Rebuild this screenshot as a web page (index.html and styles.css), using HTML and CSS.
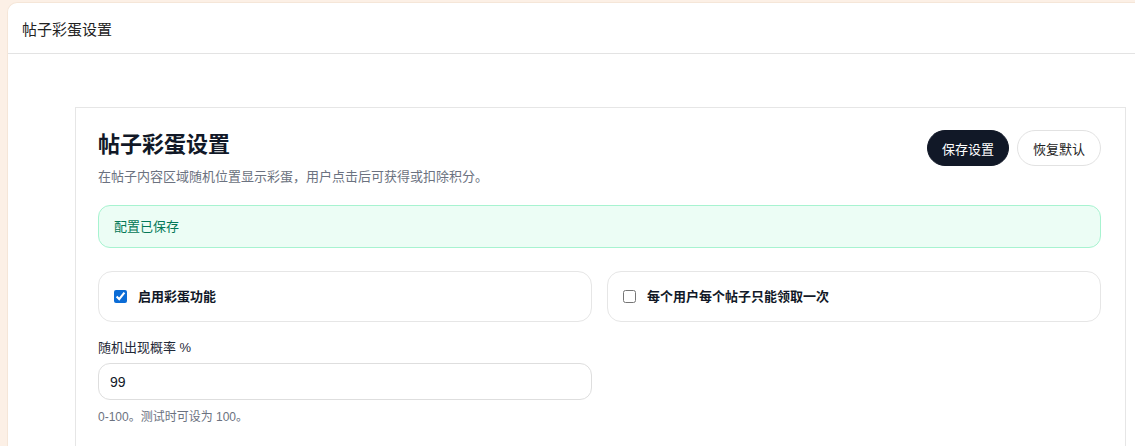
FILE: index.html
```html
<!DOCTYPE html>
<html lang="zh-CN">
<head>
  <meta charset="UTF-8">
  <meta name="viewport" content="width=device-width, initial-scale=1.0">
  <title>帖子彩蛋设置</title>
  <link rel="stylesheet" href="styles.css">
</head>
<body>
  <div class="panel">
    <div class="panel-head">帖子彩蛋设置</div>
    <div class="panel-body">
      <div class="card">
        <div class="card-top">
          <div>
            <h1>帖子彩蛋设置</h1>
            <p class="desc">在帖子内容区域随机位置显示彩蛋，用户点击后可获得或扣除积分。</p>
          </div>
          <div class="actions">
            <button class="btn btn-dark" type="button">保存设置</button>
            <button class="btn btn-light" type="button">恢复默认</button>
          </div>
        </div>

        <div class="notice">配置已保存</div>

        <div class="switches">
          <label class="switch">
            <input type="checkbox" checked>
            <span>启用彩蛋功能</span>
          </label>
          <label class="switch">
            <input type="checkbox">
            <span>每个用户每个帖子只能领取一次</span>
          </label>
        </div>

        <div class="field">
          <label for="rate">随机出现概率 %</label>
          <input id="rate" type="text" value="99">
          <p class="hint">0-100。测试时可设为 100。</p>
        </div>
      </div>
    </div>
  </div>
</body>
</html>
```

FILE: styles.css
```css
* {
  margin: 0;
  padding: 0;
  box-sizing: border-box;
}

html, body {
  height: 100%;
  overflow: hidden;
}

body {
  background-color: #fcf0e6;
  font-family: "Liberation Sans", "Noto Sans CJK SC", sans-serif;
  color: #111827;
  padding: 2px 0 0 7px;
}

/* khung trắng bên ngoài */
.panel {
  width: 1160px;
  height: 600px;
  background-color: #ffffff;
  border-top-left-radius: 10px;
  border-top: 1px solid #f5e6d8;
  border-left: 1px solid #f5e6d8;
}

.panel-head {
  height: 51px;
  display: flex;
  align-items: center;
  padding-left: 14px;
  font-size: 15px;
  color: #222222;
  border-bottom: 1px solid #e3e3e3;
}

.panel-body {
  padding: 53px 0 0 67px;
}

.card {
  width: 1051px;
  min-height: 360px;
  border: 1px solid #e6e6e6;
  padding: 21px 24px 0 22px;
}

.card-top {
  display: flex;
  justify-content: space-between;
  align-items: flex-start;
}

h1 {
  font-size: 22px;
  font-weight: bold;
  line-height: 32px;
  color: #111827;
}

.desc {
  margin-top: 6px;
  font-size: 13px;
  line-height: 19px;
  color: #6b7280;
}

.actions {
  display: flex;
  gap: 8px;
  padding-top: 1px;
}

.btn {
  height: 36px;
  padding: 0 14px;
  border-radius: 18px;
  font-family: inherit;
  font-size: 13px;
  cursor: pointer;
}

.btn-dark {
  background-color: #111827;
  border: 1px solid #111827;
  color: #ffffff;
}

.btn-light {
  background-color: #ffffff;
  border: 1px solid #e2e2e2;
  color: #222222;
  padding: 0 15px;
}

/* thông báo đã lưu */
.notice {
  margin-top: 19px;
  padding: 11px 15px;
  font-size: 13px;
  line-height: 19px;
  color: #047857;
  background-color: #ecfdf5;
  border: 1px solid #a7f3d0;
  border-radius: 12px;
}

.switches {
  margin-top: 23px;
  display: grid;
  grid-template-columns: 1fr 1fr;
  gap: 15px;
}

.switch {
  display: flex;
  align-items: center;
  gap: 11px;
  padding: 15px 15px;
  border: 1px solid #e6e6e6;
  border-radius: 14px;
  font-size: 13px;
  font-weight: bold;
  line-height: 19px;
  cursor: pointer;
}

.switch input {
  width: 13px;
  height: 13px;
  margin: 0;
  accent-color: #0b6cd6;
}

.field {
  margin-top: 16px;
}

.field label {
  display: block;
  font-size: 13px;
  line-height: 19px;
  color: #1f2937;
}

.field input {
  display: block;
  margin-top: 6px;
  width: 494px;
  height: 37px;
  padding: 0 11px;
  border: 1px solid #dedede;
  border-radius: 12px;
  font-family: inherit;
  font-size: 14px;
  color: #111827;
}

.field input:focus {
  outline: none;
  border-color: #111827;
}

.hint {
  margin-top: 9px;
  font-size: 12px;
  line-height: 17px;
  color: #6b7280;
}
```
